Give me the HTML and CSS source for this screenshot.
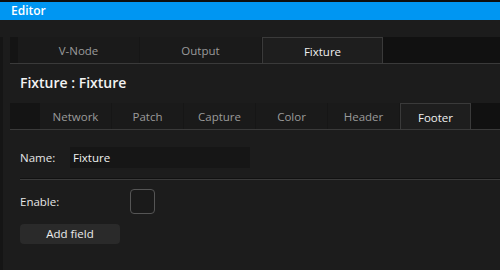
FILE: index.html
```html
<!DOCTYPE html>
<html>
<head>
<meta charset="utf-8">
<link rel="stylesheet" href="styles.css">
</head>
<body>
<div class="window">
  <div class="titlebar">Editor</div>
  <div class="body">
    <div class="tabs tabs-main">
      <div class="tab-lead"></div>
      <div class="tab">V-Node</div>
      <div class="tab">Output</div>
      <div class="tab active">Fixture</div>
      <div class="tab-rest"></div>
    </div>
    <div class="heading">Fixture : Fixture</div>
    <div class="tabs tabs-sub">
      <div class="tab-lead"></div>
      <div class="tab">Network</div>
      <div class="tab">Patch</div>
      <div class="tab">Capture</div>
      <div class="tab">Color</div>
      <div class="tab">Header</div>
      <div class="tab active">Footer</div>
      <div class="tab-rest"></div>
    </div>
    <div class="form">
      <div class="row name-row">
        <span class="label">Name:</span>
        <div class="input">Fixture</div>
      </div>
      <div class="divider"></div>
      <div class="row enable-row">
        <span class="label">Enable:</span>
        <div class="checkbox"></div>
      </div>
      <div class="button">Add field</div>
    </div>
  </div>
</div>
</body>
</html>
```
FILE: styles.css
```css
html, body {
  margin: 0;
  padding: 0;
  background: #1c1c1c;
  font-family: "Open Sans", "Noto Sans", sans-serif;
  font-size: 11.5px;
  color: #e6e6e6;
}
.window {
  width: 500px;
  height: 270px;
  overflow: hidden;
  border-top: 2px solid #0e0e0e;
  box-sizing: border-box;
}
.titlebar {
  height: 18px;
  line-height: 18px;
  background: #0096f2;
  color: #ffffff;
  padding-left: 11px;
  font-size: 12px;
  font-weight: 600;
}
.body {
  border-left: 3px solid #151515;
  height: 250px;
  padding-left: 7px;
  box-sizing: border-box;
}
.tabs {
  display: flex;
  height: 26px;
  border-bottom: 1px solid #3a3a3a;
}
.tabs-main {
  margin-top: 17px;
}
.tab-lead {
  background: #141414;
  flex: none;
}
.tabs-main .tab-lead { width: 8px; }
.tabs-sub .tab-lead { width: 30px; }
.tab {
  flex: none;
  display: flex;
  align-items: center;
  justify-content: center;
  background: #1a1a1a;
  color: #9a9a9a;
  border-right: 1px solid #161616;
  box-sizing: border-box;
  padding-top: 1px;
}
.tabs-main .tab { width: 122px; }
.tabs-sub .tab { width: 72px; }
.tab.active {
  background: #1e1e1e;
  color: #f0f0f0;
  border: 1px solid #3a3a3a;
  border-bottom: none;
}
.tabs-main .tab.active { width: 121px; }
.tabs-sub .tab.active { width: 71px; }
.tab-rest {
  flex: 1;
  background: #111111;
}
.heading {
  height: 39px;
  line-height: 38px;
  padding-left: 10px;
  font-size: 14px;
  font-weight: 600;
  color: #f2f2f2;
}
.form {
  padding-left: 10px;
}
.row {
  display: flex;
  align-items: center;
}
.name-row {
  margin-top: 17px;
  height: 21px;
}
.label {
  width: 50px;
  flex: none;
  color: #e6e6e6;
}
.name-row .input {
  width: 180px;
  height: 21px;
  line-height: 21px;
  background: #161616;
  padding-left: 3px;
  box-sizing: border-box;
  color: #f0f0f0;
}
.divider {
  margin-top: 10px;
  height: 1px;
  background: #111111;
  border-bottom: 1px solid #3a3a3a;
}
.enable-row {
  margin-top: 9px;
  height: 25px;
}
.enable-row .label {
  width: 110px;
}
.checkbox {
  width: 25px;
  height: 25px;
  box-sizing: border-box;
  border: 1px solid #555555;
  border-radius: 4px;
  background: #1a1a1a;
}
.button {
  margin-top: 10px;
  width: 100px;
  height: 20px;
  line-height: 20px;
  text-align: center;
  background: #2a2a2a;
  border-radius: 4px;
  color: #ececec;
}
```
